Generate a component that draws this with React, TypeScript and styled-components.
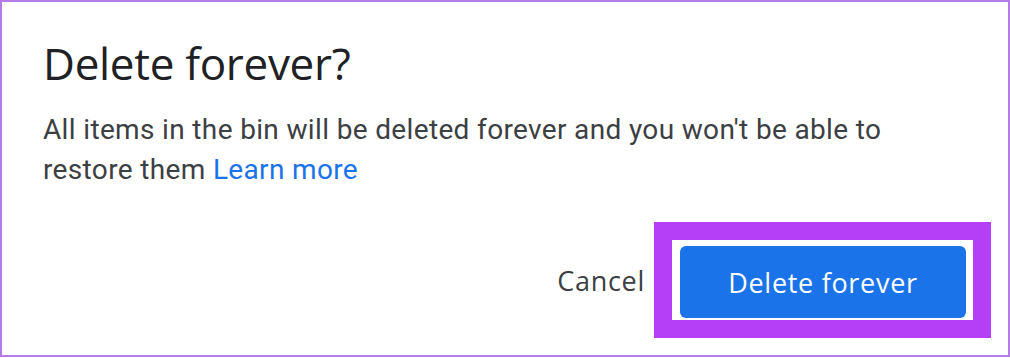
import styled, { createGlobalStyle } from 'styled-components';

const GlobalStyle = createGlobalStyle`
  html, body {
    margin: 0;
    padding: 0;
    background: #ffffff;
  }
`;

// 바깥 테두리가 있는 다이얼로그 틀
const Frame = styled.div`
  box-sizing: border-box;
  width: 1010px;
  height: 357px;
  border: 2px solid #b57be6;
  background: #ffffff;
  display: flex;
  flex-direction: column;
  padding: 0 17px 17px 41px;
`;

const Title = styled.h1`
  margin: 33px 0 0;
  font-family: 'Open Sans', 'Liberation Sans', sans-serif;
  font-weight: 400;
  font-size: 44px;
  line-height: 56px;
  color: #202124;
  letter-spacing: -0.3px;
`;

const Message = styled.p`
  margin: 19px 0 0;
  font-family: Roboto, 'Liberation Sans', sans-serif;
  font-size: 28px;
  line-height: 40px;
  letter-spacing: 0.35px;
  color: #3c4043;
  width: 850px;
`;

const Link = styled.a`
  color: #1a73e8;
  text-decoration: none;
`;

const Actions = styled.div`
  margin-top: auto;
  display: flex;
  justify-content: flex-end;
  align-items: center;
  gap: 9px;
`;

const TextButton = styled.button`
  border: none;
  background: none;
  padding: 0;
  font-family: 'Open Sans', 'Liberation Sans', sans-serif;
  font-size: 27px;
  letter-spacing: 0.7px;
  color: #3c4043;
  cursor: pointer;
`;

// 강조용 보라색 박스
const Highlight = styled.div`
  border: 18px solid #b43ff7;
  background: #ffffff;
  padding: 6px 7px 2px 8px;
  display: flex;
`;

const PrimaryButton = styled.button`
  width: 286px;
  height: 72px;
  border: none;
  border-radius: 6px;
  background: #1a73e8;
  color: #ffffff;
  font-family: 'Open Sans', 'Liberation Sans', sans-serif;
  font-size: 27px;
  letter-spacing: 0.7px;
  cursor: pointer;
`;

const App = () => {
  return (
    <>
      <GlobalStyle />
      <Frame>
        <Title>Delete forever?</Title>
        <Message>
          All items in the bin will be deleted forever and you won't be able to restore them{' '}
          <Link href="#">Learn more</Link>
        </Message>
        <Actions>
          <TextButton>Cancel</TextButton>
          <Highlight>
            <PrimaryButton>Delete forever</PrimaryButton>
          </Highlight>
        </Actions>
      </Frame>
    </>
  );
};

export default App;
